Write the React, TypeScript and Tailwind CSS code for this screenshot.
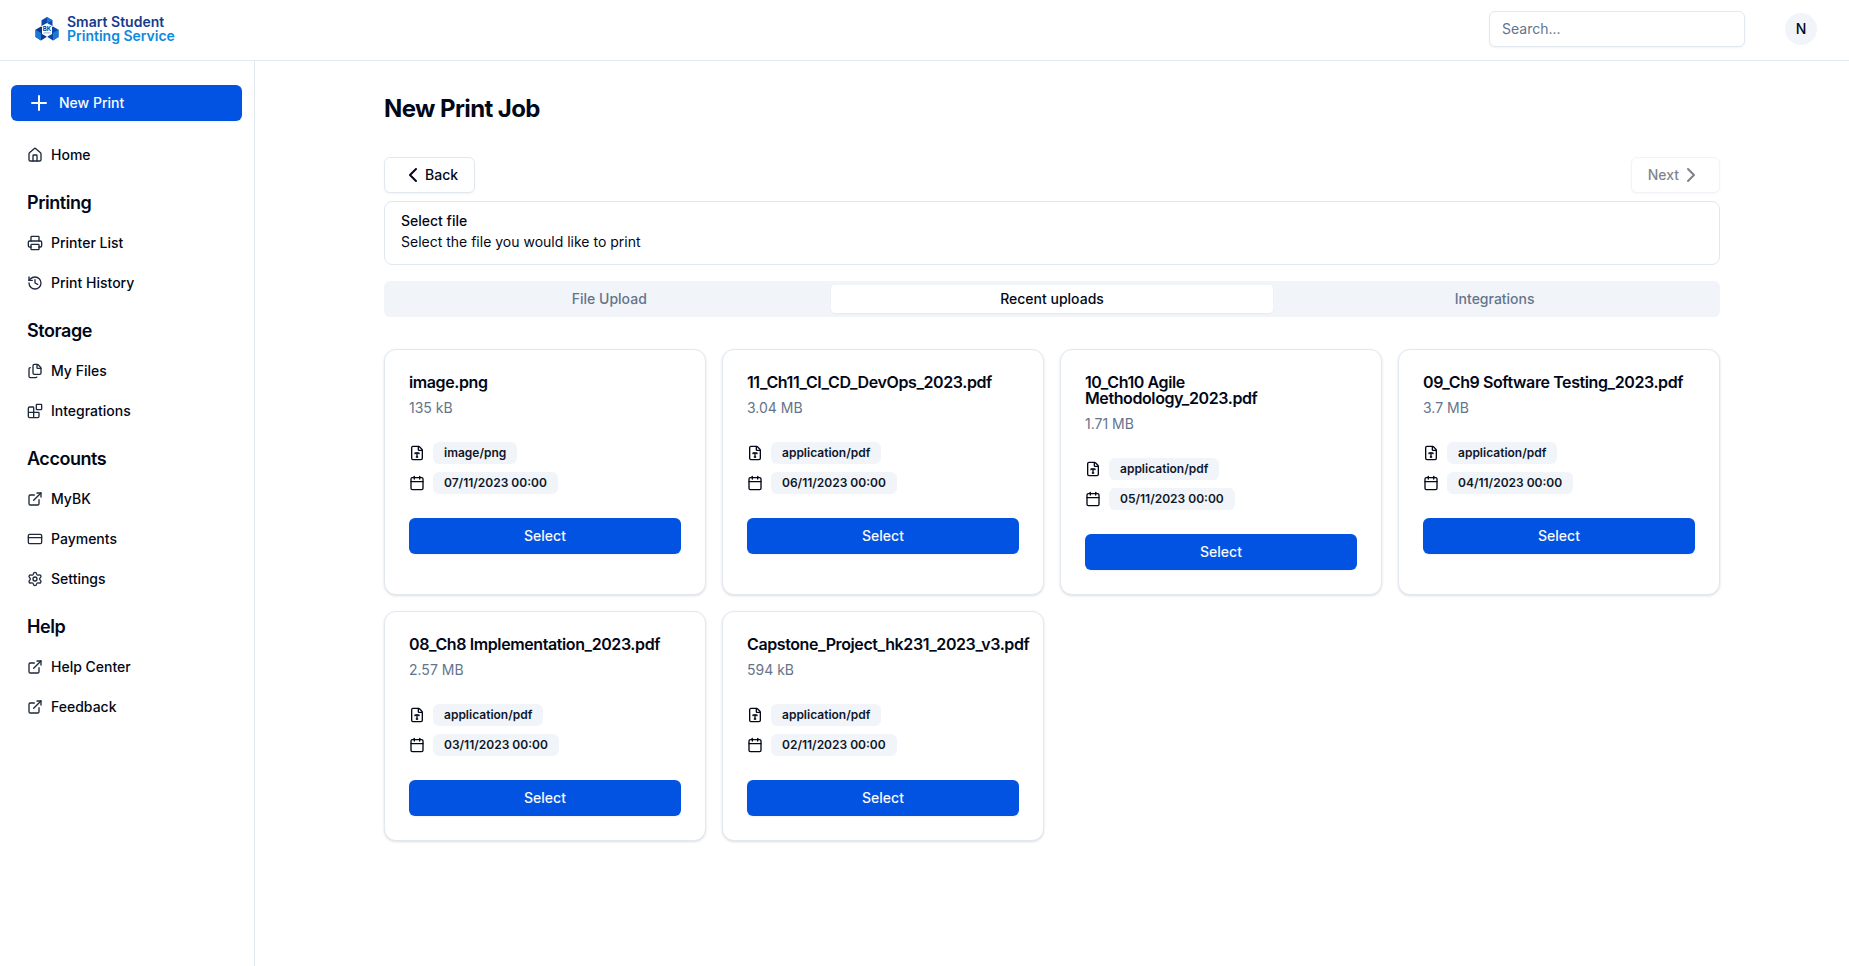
import {
  Blocks,
  Calendar,
  ChevronLeft,
  ChevronRight,
  CreditCard,
  ExternalLink,
  FileType,
  Files,
  History,
  Home,
  Plus,
  Printer,
  Settings,
} from 'lucide-react';

const nav = [
  {
    items: [{ label: 'Home', icon: Home }],
  },
  {
    title: 'Printing',
    items: [
      { label: 'Printer List', icon: Printer },
      { label: 'Print History', icon: History },
    ],
  },
  {
    title: 'Storage',
    items: [
      { label: 'My Files', icon: Files },
      { label: 'Integrations', icon: Blocks },
    ],
  },
  {
    title: 'Accounts',
    items: [
      { label: 'MyBK', icon: ExternalLink },
      { label: 'Payments', icon: CreditCard },
      { label: 'Settings', icon: Settings },
    ],
  },
  {
    title: 'Help',
    items: [
      { label: 'Help Center', icon: ExternalLink },
      { label: 'Feedback', icon: ExternalLink },
    ],
  },
];

const files = [
  { name: 'image.png', size: '135 kB', type: 'image/png', date: '07/11/2023 00:00' },
  { name: '11_Ch11_CI_CD_DevOps_2023.pdf', size: '3.04 MB', type: 'application/pdf', date: '06/11/2023 00:00' },
  { name: '10_Ch10 Agile Methodology_2023.pdf', size: '1.71 MB', type: 'application/pdf', date: '05/11/2023 00:00' },
  { name: '09_Ch9 Software Testing_2023.pdf', size: '3.7 MB', type: 'application/pdf', date: '04/11/2023 00:00' },
  { name: '08_Ch8 Implementation_2023.pdf', size: '2.57 MB', type: 'application/pdf', date: '03/11/2023 00:00' },
  { name: 'Capstone_Project_hk231_2023_v3.pdf', size: '594 kB', type: 'application/pdf', date: '02/11/2023 00:00' },
];

const Logo = () => (
  <svg width="24" height="24" viewBox="0 0 24 24">
    <path d="M12 0 L17.5 3.2 L17.5 9 L12 12 L6.5 9 L6.5 3.2 Z" fill="#0d47a8" />
    <path d="M12 0 L17.5 3.2 L12 6.4 Z" fill="#1a78d8" />
    <path d="M6 9.5 L11.5 12.7 L11.5 20 L6 23.5 L0.5 20 L0.5 12.7 Z" fill="#0a3a90" />
    <path d="M0.5 12.7 L6 16 L6 23.5 L0.5 20 Z" fill="#1a78d8" />
    <path d="M18 9.5 L23.5 12.7 L23.5 20 L18 23.5 L12.5 20 L12.5 12.7 Z" fill="#0d47a8" />
    <path d="M23.5 12.7 L18 16 L18 23.5 L23.5 20 Z" fill="#1a78d8" />
    <path d="M12 6 L17 8.8 L17 17 L12 19.8 L7 17 L7 8.8 Z" fill="#ffffff" />
    <text x="12" y="14" textAnchor="middle" fontSize="6" fontWeight="700" fill="#0a3a90" fontFamily="Inter, sans-serif">BK</text>
    <rect x="8.5" y="15.5" width="7" height="0.8" fill="#7c9cd0" />
  </svg>
);

const FileCard = ({ file }: { file: (typeof files)[number] }) => (
  <div className="rounded-xl border border-[#e2e8f0] bg-white p-6 shadow-sm">
    <h3 className="text-base leading-4 font-semibold tracking-tight text-[#020817]">{file.name}</h3>
    <p className="mt-2 text-sm leading-5 text-[#64748b]">{file.size}</p>
    <div className="mt-6 flex items-center gap-2">
      <FileType size={16} className="text-[#020817]" />
      <span className="rounded-md border border-transparent bg-[#f1f5f9] px-2.5 py-0.5 text-xs leading-4 font-semibold text-[#0f172a]">{file.type}</span>
    </div>
    <div className="mt-2 flex items-center gap-2">
      <Calendar size={16} className="text-[#020817]" />
      <span className="rounded-md border border-transparent bg-[#f1f5f9] px-2.5 py-0.5 text-xs leading-4 font-semibold text-[#0f172a]">{file.date}</span>
    </div>
    <button className="mt-6 h-9 w-full rounded-md bg-[#0353e3] text-sm font-medium text-[#f8fafc] shadow-xs">Select</button>
  </div>
);

export default function App() {
  return (
    <div className="flex h-[966px] flex-col overflow-hidden bg-white font-['Inter',sans-serif] text-[#020817]">
      <header className="flex h-[61px] shrink-0 items-center justify-between border-b border-[#e2e8f0] pr-8 pb-0.5 pl-[35px]">
        <div className="flex items-center gap-2">
          <Logo />
          <div className="text-sm leading-[14px] font-semibold">
            <div className="text-[#173a8c]">Smart Student</div>
            <div className="text-[#0a8ae0]">Printing Service</div>
          </div>
        </div>
        <div className="flex items-center gap-10">
          <input
            placeholder="Search..."
            className="h-9 w-[256px] rounded-md border border-[#e2e8f0] bg-white px-3 pb-px text-sm shadow-xs outline-none placeholder:text-[#64748b]"
          />
          <div className="flex h-8 w-8 items-center justify-center rounded-full bg-[#f1f5f9] text-sm font-medium">N</div>
        </div>
      </header>
      <div className="flex min-h-0 flex-1">
        <aside className="w-[255px] shrink-0 border-r border-[#e2e8f0] px-[11px] pt-6">
          <button className="flex h-9 w-[231px] items-center gap-2 rounded-md bg-[#0353e3] pl-4 text-sm font-medium text-[#f8fafc] shadow-xs">
            <Plus size={24} strokeWidth={2} />
            New Print
          </button>
          <nav className="mt-[14px]">
            {nav.map((group, i) => (
              <div key={i}>
                {group.title && (
                  <div className="px-4 pt-[14px] pb-1.5 text-lg leading-7 font-semibold tracking-tight">{group.title}</div>
                )}
                {group.items.map(({ label, icon: Icon }) => (
                  <div key={label} className="flex h-10 items-center gap-2 px-4 text-sm font-medium">
                    <Icon size={16} className="text-[#1e293b]" />
                    {label}
                  </div>
                ))}
              </div>
            ))}
          </nav>
        </aside>
        <main className="flex-1 px-[129px]">
          <h1 className="mt-8 text-2xl leading-8 font-bold tracking-tight">New Print Job</h1>
          <div className="mt-8 flex items-center justify-between">
            <button className="flex h-9 items-center rounded-md border border-[#e2e8f0] bg-white px-4 text-sm font-medium shadow-xs">
              <ChevronLeft size={24} />
              Back
            </button>
            <button className="flex h-9 items-center rounded-md border border-[#e2e8f0] bg-white px-4 text-sm font-medium opacity-50 shadow-xs">
              Next
              <ChevronRight size={24} />
            </button>
          </div>
          <div className="mt-2 rounded-lg border border-[#e2e8f0] px-4 pt-2 pb-3 text-sm leading-[21px]">
            <div className="font-medium">Select file</div>
            <div>Select the file you would like to print</div>
          </div>
          <div className="mt-4 grid h-9 grid-cols-3 items-center rounded-md bg-[#f1f5f9] p-1 text-sm font-medium text-[#64748b]">
            <div className="text-center">File Upload</div>
            <div className="rounded-sm bg-white py-1.5 text-center leading-4 text-[#020817] shadow-xs">Recent uploads</div>
            <div className="text-center">Integrations</div>
          </div>
          <div className="mt-8 grid grid-cols-4 gap-4">
            {files.map((file) => (
              <FileCard key={file.name} file={file} />
            ))}
          </div>
        </main>
      </div>
    </div>
  );
}
